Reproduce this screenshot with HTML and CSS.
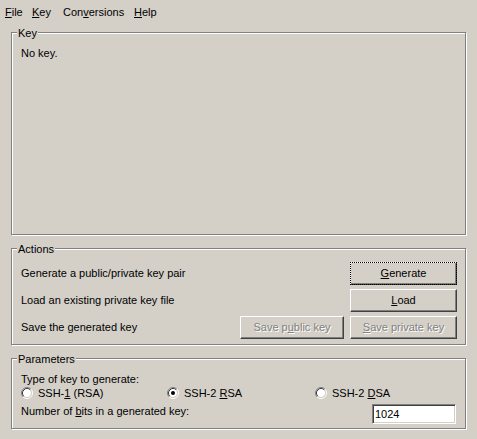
FILE: index.html
```html
<!DOCTYPE html>
<html lang="en">
<head>
<meta charset="utf-8">
<title>PuTTY Key Generator</title>
<link rel="stylesheet" href="styles.css">
</head>
<body>
<div class="window">
  <nav class="menubar">
    <span class="menu-item"><u>F</u>ile</span>
    <span class="menu-item"><u>K</u>ey</span>
    <span class="menu-item">Con<u>v</u>ersions</span>
    <span class="menu-item"><u>H</u>elp</span>
  </nav>
  <main class="content">
    <fieldset class="group group-key">
      <legend class="group-title">Key</legend>
      <div class="key-body"><p class="key-text">No key.</p></div>
    </fieldset>

    <fieldset class="group group-actions">
      <legend class="group-title">Actions</legend>
      <div class="actions-body">
        <div class="action-row">
          <span class="action-label">Generate a public/private key pair</span>
          <button class="btn btn-wide btn-default" type="button"><u>G</u>enerate</button>
        </div>
        <div class="action-row">
          <span class="action-label">Load an existing private key file</span>
          <button class="btn btn-wide" type="button"><u>L</u>oad</button>
        </div>
        <div class="action-row">
          <span class="action-label">Save the generated key</span>
          <div class="btn-pair">
            <button class="btn btn-public" type="button" disabled>Save p<u>u</u>blic key</button>
            <button class="btn btn-wide" type="button" disabled><u>S</u>ave private key</button>
          </div>
        </div>
      </div>
    </fieldset>

    <fieldset class="group group-params">
      <legend class="group-title">Parameters</legend>
      <div class="params-body">
        <div class="params-label">Type of key to generate:</div>
        <div class="radio-row">
          <span class="radio">
            <svg class="radio-icon" width="12" height="12" viewBox="0 0 12 12" aria-hidden="true">
              <circle cx="6" cy="6" r="4.2" fill="#fff"/>
              <path d="M2.11 9.89 A5.5 5.5 0 0 1 9.89 2.11" fill="none" stroke="#808080"/>
              <path d="M9.89 2.11 A5.5 5.5 0 0 1 2.11 9.89" fill="none" stroke="#fff"/>
              <path d="M2.82 9.18 A4.5 4.5 0 0 1 9.18 2.82" fill="none" stroke="#404040"/>
              <path d="M9.18 2.82 A4.5 4.5 0 0 1 2.82 9.18" fill="none" stroke="#d4d0c8"/>
            </svg>
            <span>SSH-<u>1</u> (RSA)</span>
          </span>
          <span class="radio">
            <svg class="radio-icon" width="12" height="12" viewBox="0 0 12 12" aria-hidden="true">
              <circle cx="6" cy="6" r="4.2" fill="#fff"/>
              <path d="M2.11 9.89 A5.5 5.5 0 0 1 9.89 2.11" fill="none" stroke="#808080"/>
              <path d="M9.89 2.11 A5.5 5.5 0 0 1 2.11 9.89" fill="none" stroke="#fff"/>
              <path d="M2.82 9.18 A4.5 4.5 0 0 1 9.18 2.82" fill="none" stroke="#404040"/>
              <path d="M9.18 2.82 A4.5 4.5 0 0 1 2.82 9.18" fill="none" stroke="#d4d0c8"/>
              <circle cx="6" cy="6" r="2" fill="#000"/>
            </svg>
            <span>SSH-2 <u>R</u>SA</span>
          </span>
          <span class="radio">
            <svg class="radio-icon" width="12" height="12" viewBox="0 0 12 12" aria-hidden="true">
              <circle cx="6" cy="6" r="4.2" fill="#fff"/>
              <path d="M2.11 9.89 A5.5 5.5 0 0 1 9.89 2.11" fill="none" stroke="#808080"/>
              <path d="M9.89 2.11 A5.5 5.5 0 0 1 2.11 9.89" fill="none" stroke="#fff"/>
              <path d="M2.82 9.18 A4.5 4.5 0 0 1 9.18 2.82" fill="none" stroke="#404040"/>
              <path d="M9.18 2.82 A4.5 4.5 0 0 1 2.82 9.18" fill="none" stroke="#d4d0c8"/>
            </svg>
            <span>SSH-2 <u>D</u>SA</span>
          </span>
        </div>
        <div class="bits-row">
          <span class="bits-label">Number of <u>b</u>its in a generated key:</span>
          <input class="bits-input" type="text" value="1024">
        </div>
      </div>
    </fieldset>
  </main>
</div>
</body>
</html>
```

FILE: styles.css
```css
html, body {
  margin: 0;
  padding: 0;
}

body {
  background: #d4d0c8;
  color: #000;
  font-family: "Liberation Sans", Arial, sans-serif;
  font-size: 11px;
  line-height: 13px;
  width: 477px;
  height: 439px;
  overflow: hidden;
}

u {
  text-decoration: underline;
  text-underline-offset: 1px;
}

.menubar {
  display: grid;
  grid-template-columns: 27px 31px 71px auto;
  height: 22px;
  box-sizing: border-box;
  padding: 6px 0 0 5px;
}

.menu-item {
  line-height: 13px;
}

.content {
  padding: 3px 11px 0;
}

.group {
  margin: 0;
  padding: 0;
  min-width: 0;
  border: 1px solid #808080;
  box-shadow: inset 1px 1px #fff, 1px 1px #fff;
}

.group-title {
  margin-left: 5px;
  padding: 2px 1px 0;
  line-height: 13px;
  background: #d4d0c8;
}

.key-body {
  height: 194px;
  box-sizing: border-box;
  padding: 7px 9px 0;
}

.key-text {
  margin: 0;
}

.group-actions,
.group-params {
  margin-top: 6px;
}

.actions-body {
  display: flex;
  flex-direction: column;
  gap: 4px;
  padding: 6px 8px 5px 9px;
}

.action-row {
  display: flex;
  justify-content: space-between;
  align-items: center;
  height: 23px;
}

.btn-pair {
  display: flex;
  gap: 6px;
}

.btn {
  height: 23px;
  box-sizing: border-box;
  margin: 0;
  padding: 0;
  font: inherit;
  color: #000;
  background: #d4d0c8;
  border: 1px solid;
  border-color: #fff #404040 #404040 #fff;
  box-shadow: inset -1px -1px #808080;
  border-radius: 0;
}

.btn-wide {
  width: 107px;
}

.btn-public {
  width: 104px;
}

.btn-default {
  outline: 1px dotted #000;
  outline-offset: -1px;
}

.btn:disabled {
  color: #808080;
  text-shadow: 1px 1px #fff;
}

.params-body {
  padding: 7px 8px 4px 9px;
}

.radio-row {
  display: grid;
  grid-template-columns: 146px 148px 1fr;
  height: 14px;
  align-items: center;
}

.radio {
  display: flex;
  align-items: center;
  gap: 5px;
}

.radio-icon {
  display: block;
  flex: none;
}

.bits-row {
  display: flex;
  justify-content: space-between;
  align-items: flex-start;
  height: 20px;
  margin-top: 4px;
}

.bits-label {
  margin-top: 1px;
}

.bits-input {
  width: 84px;
  height: 20px;
  box-sizing: border-box;
  margin: 0 1px 0 0;
  padding: 0 2px;
  font: inherit;
  color: #000;
  background: #fff;
  border: 1px solid;
  border-color: #808080 #fff #fff #808080;
  box-shadow: inset 1px 1px #404040, inset -1px -1px #d4d0c8;
  border-radius: 0;
  outline: none;
}
```
